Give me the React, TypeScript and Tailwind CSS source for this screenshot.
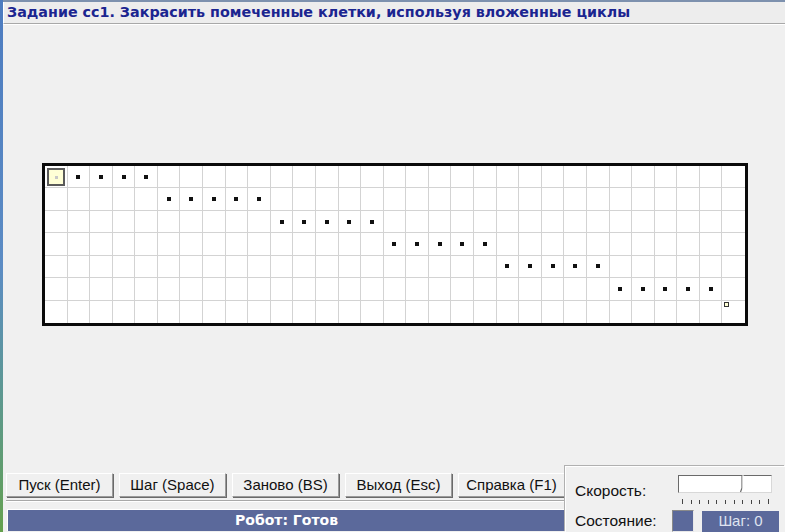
const ROWS = 7;
const COLS = 31;

function hasDot(r: number, c: number) {
  if (r === 0) return c >= 1 && c <= 4;
  if (r <= 5) return c >= r * 5 && c <= r * 5 + 4;
  return false;
}

function Cell({ r, c }: { r: number; c: number }) {
  const lastCol = c === COLS - 1;
  const lastRow = r === ROWS - 1;
  return (
    <div
      className={
        "relative flex items-center justify-center border-[#d3d3d3] bg-white " +
        (lastCol ? "" : "border-r ") +
        (lastRow ? "" : "border-b")
      }
    >
      {hasDot(r, c) && <div className="h-[4px] w-[4px] bg-[#111]" />}
      {r === 0 && c === 0 && (
        <div className="absolute left-[2px] top-[2px] flex h-[18px] w-[18px] items-center justify-center border-2 border-[#5a5a5a] bg-[#ffffd6]">
          <div className="h-[3px] w-[3px] bg-[#c8c8c8]" />
        </div>
      )}
      {r === ROWS - 1 && c === COLS - 1 && (
        <div className="absolute left-[2px] top-[1px] h-[5px] w-[5px] border border-[#333] bg-[#ffffd6]" />
      )}
    </div>
  );
}

const buttons = ["Пуск (Enter)", "Шаг (Space)", "Заново (BS)", "Выход (Esc)", "Справка (F1)"];

export default function App() {
  const cells = [];
  for (let r = 0; r < ROWS; r++) {
    for (let c = 0; c < COLS; c++) {
      cells.push(<Cell key={r + "-" + c} r={r} c={c} />);
    }
  }

  return (
    <div className="flex h-[532px] w-[785px] overflow-hidden bg-[#f0f0f0] font-['Liberation_Sans',Arial,sans-serif] text-[#111]">
      {/* window edge */}
      <div className="w-[3px] bg-gradient-to-b from-[#4d7cc0] via-[#5c8cc4] to-[#64a04c]" />

      <div className="flex flex-1 flex-col">
        {/* Title */}
        <div className="h-[2px] bg-[#7d91ae]" />
        <div className="flex h-[22px] items-center border-b border-l border-b-[#a8a8a8] border-l-white bg-[#ededed] pl-[3px] shadow-[0_1px_0_#fff]">
          <span className="font-['DejaVu_Sans',Verdana,sans-serif] text-[14.3px] font-bold leading-none text-[#1b2590]">
            Задание сс1. Закрасить помеченные клетки, используя вложенные циклы
          </span>
        </div>

        {/* Field */}
        <div className="flex-1 pl-[39px] pt-[139px]">
          <div className="grid h-[163px] w-[706px] grid-cols-[repeat(31,minmax(0,1fr))] grid-rows-[repeat(7,minmax(0,1fr))] border-[3px] border-[#0a0a0a]">
            {cells}
          </div>
        </div>

        {/* Bottom */}
        <div className="flex h-[66px]">
          <div className="flex flex-1 flex-col">
            <div className="flex gap-[6px] pl-[3px] pt-[7px]">
              {buttons.map((b) => (
                <div
                  key={b}
                  className="flex h-[24px] w-[107px] items-center justify-center border border-b-[#9a9a9a] border-l-white border-r-[#9a9a9a] border-t-white bg-[#f0f0f0] text-[15px] shadow-[1px_1px_0_#6a6a6a]"
                >
                  {b}
                </div>
              ))}
            </div>
            <div className="ml-[3px] mt-[3px] h-[2px] border-b border-t border-b-white border-t-[#a8a8a8]" />
            <div className="ml-[4px] mt-[7px] flex h-[22px] items-center justify-center border-l border-t border-white bg-[#5b699b] font-['DejaVu_Sans',Verdana,sans-serif] text-[14px] font-bold text-white">
              Робот: Готов
            </div>
          </div>

          {/* Right panel */}
          <div className="flex w-[220px] flex-col border-l border-t border-white pl-[9px] shadow-[-1px_-1px_0_#b0b0b0]">
            <div className="flex pt-[8px]">
              <div className="w-[103px] pt-[4px] text-[15.5px]">Скорость:</div>
              <div className="flex flex-col">
                <div className="relative h-[18px] w-[94px] border-l border-t border-l-[#6a6a6a] border-t-[#6a6a6a] border-b border-r border-b-[#d8d8d8] border-r-[#d8d8d8] bg-white">
                  <svg className="absolute left-[59px] top-[-1px]" width="8" height="19" viewBox="0 0 8 19">
                    <path d="M4 0 V13 L2.5 17" stroke="#6a6a6a" strokeWidth="1.2" fill="none" />
                    <path d="M5 0 V14" stroke="#fff" strokeWidth="1" fill="none" />
                  </svg>
                </div>
                <div className="ml-[4px] mt-[6px] flex h-[5px] w-[87px] items-end justify-between">
                  {Array.from({ length: 11 }).map((_, i) => (
                    <div
                      key={i}
                      className={i === 0 || i === 10 ? "h-[5px] w-px bg-[#444]" : "h-[4px] w-px bg-[#444]"}
                    />
                  ))}
                </div>
              </div>
            </div>
            <div className="mt-[6px] flex h-[22px] items-center">
              <div className="w-[97px] text-[15.5px]">Состояние:</div>
              <div className="h-[22px] w-[22px] border border-b-[#e8e8e8] border-l-[#8a8a8a] border-r-[#e8e8e8] border-t-[#8a8a8a] bg-[#5b699b]" />
              <div className="ml-[8px] flex h-[21px] w-[77px] items-center justify-center bg-[#5b699b] text-[15px] text-[#dfe3f0]">
                Шаг: 0
              </div>
            </div>
          </div>
        </div>
      </div>
    </div>
  );
}
